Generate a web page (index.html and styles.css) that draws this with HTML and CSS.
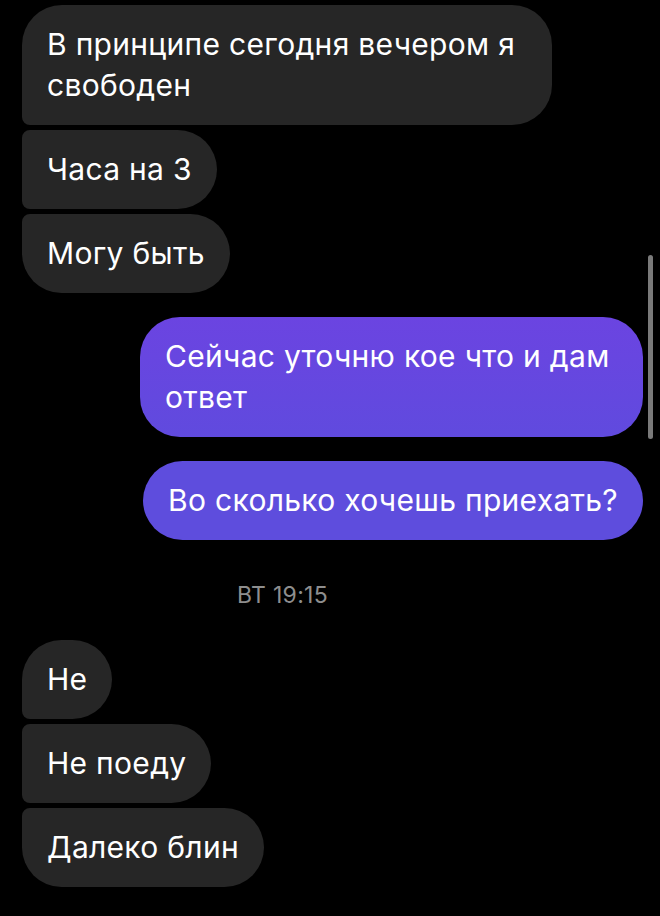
FILE: index.html
```html
<!DOCTYPE html>
<html lang="ru">
<head>
    <meta charset="UTF-8">
    <meta name="viewport" content="width=device-width, initial-scale=1.0">
    <title>Чат</title>
    <link rel="stylesheet" href="styles.css">
</head>
<body>
    <div class="chat">
        <div class="msg in first">В принципе сегодня вечером я свободен</div>
        <div class="msg in middle">Часа на 3</div>
        <div class="msg in last">Могу быть</div>

        <div class="msg out top-gap">Сейчас уточню кое что и дам ответ</div>
        <div class="msg out out-2 top-gap">Во сколько хочешь приехать?</div>

        <div class="time">ВТ 19:15</div>

        <div class="msg in first">Не</div>
        <div class="msg in middle">Не поеду</div>
        <div class="msg in last">Далеко блин</div>
    </div>
    <div class="scrollbar"></div>
</body>
</html>
```

FILE: styles.css
```css
body {
    margin: 0;
    background: #000;
    font-family: Inter, "Noto Sans", Arial, sans-serif;
    color: #fff;
    width: 660px;
    height: 916px;
    overflow: hidden;
    position: relative;
}
.chat {
    display: flex;
    flex-direction: column;
    gap: 5px;
    padding-top: 5px;
}
.msg {
    box-sizing: border-box;
    max-width: 530px;
    padding: 19px 25px;
    font-size: 30px;
    line-height: 41px;
    letter-spacing: 0.3px;
    border-radius: 40px;
}
.in {
    align-self: flex-start;
    margin-left: 22px;
    background: #262626;
}
.in.first {
    border-bottom-left-radius: 8px;
}
.in.middle {
    border-top-left-radius: 8px;
    border-bottom-left-radius: 8px;
}
.in.last {
    border-top-left-radius: 8px;
}
.out {
    align-self: flex-end;
    max-width: 503px;
    margin-right: 17px;
    background: linear-gradient(180deg, #6b44e1 0%, #604ade 100%);
}
.out-2 {
    background: #5e4ddd;
}
.top-gap {
    margin-top: 19px;
}
.time {
    margin: 36px 0 26px 237px;
    font-size: 23px;
    line-height: 28px;
    letter-spacing: 0.3px;
    color: #8e8e8e;
}
.scrollbar {
    position: absolute;
    left: 648px;
    top: 255px;
    width: 5px;
    height: 184px;
    border-radius: 3px;
    background: #7a7a7a;
}
```
